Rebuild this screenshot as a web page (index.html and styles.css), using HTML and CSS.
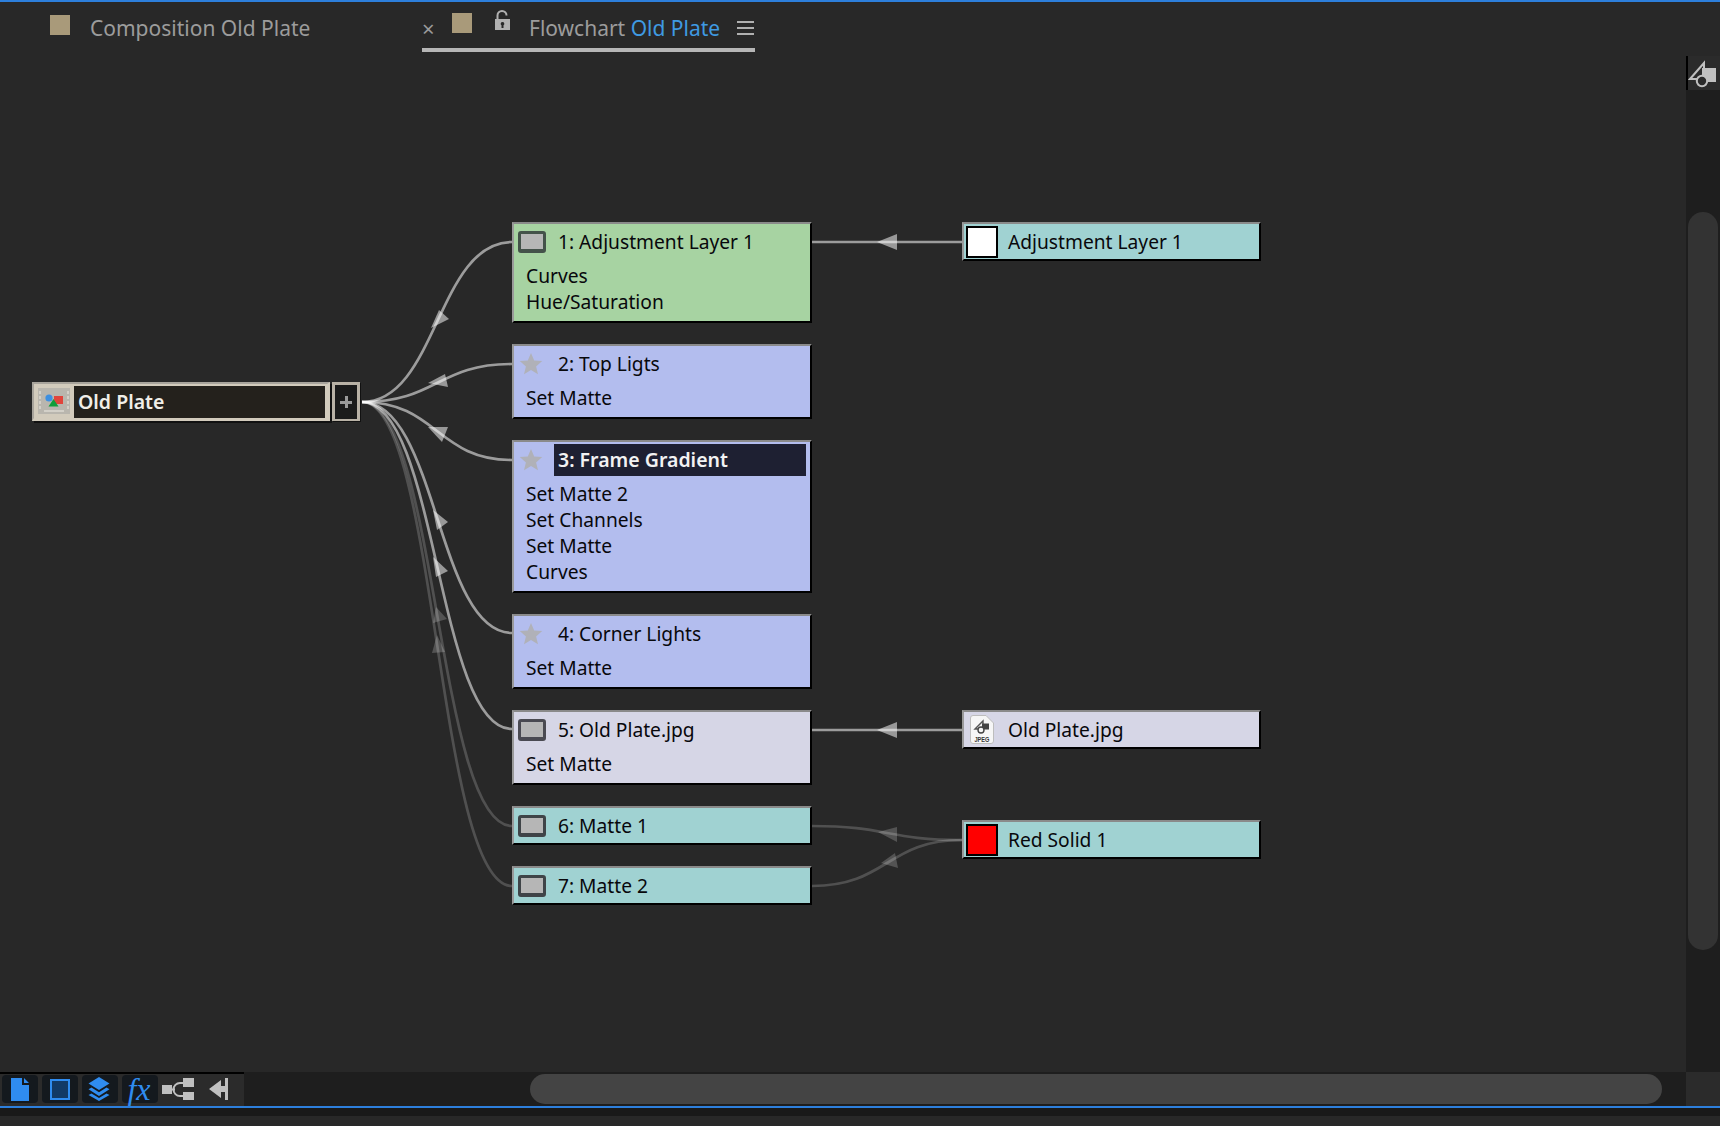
FILE: index.html
```html
<!DOCTYPE html>
<html lang="en">
<head>
<meta charset="utf-8">
<title>Flowchart Old Plate</title>
<link rel="stylesheet" href="styles.css">
</head>
<body>
<div class="app">
  <header class="tabs">
    <div class="tab tab-comp">
      <span class="swatch"></span>
      <span class="tab-label">Composition Old Plate</span>
    </div>
    <div class="tab tab-flow">
      <span class="close">×</span>
      <span class="swatch"></span>
      <svg class="lock" width="17" height="21" viewBox="0 0 17 21"><path d="M3.500 9V5.500a4.500 4.500 0 0 1 9 0" fill="none" stroke="#b0b0b0" stroke-width="2"/><path fill-rule="evenodd" fill="#b0b0b0" d="M1 9h15v11H1zM8.500 12a1.800 1.800 0 0 0-1 3.300V18h2v-2.700a1.800 1.800 0 0 0-1-3.300z"/></svg>
      <span class="tab-label">Flowchart <span class="accent">Old Plate</span></span>
      <span class="burger"><i></i><i></i><i></i></span>
    </div>
  </header>

  <div class="main">
    <section class="canvas">
      <svg class="edges" width="1686" height="1016" viewBox="0 56 1686 1016">
        <g class="edge light">
          <path d="M362 402C437 402 437 242 512 242"/>
          <path d="M362 402C437 402 437 364 512 364"/>
          <path d="M362 402C437 402 437 460 512 460"/>
          <path d="M362 402C437 402 437 633 512 633"/>
          <path d="M362 402C437 402 437 729 512 729"/>
          <path d="M812 242H962"/>
          <path d="M812 730H962"/>
        </g>
        <g class="edge dark">
          <path d="M362 402C437 402 437 826 512 826"/>
          <path d="M362 402C437 402 437 886 512 886"/>
          <path d="M812 826C887 826 887 840 962 840"/>
          <path d="M812 886C887 886 887 840 962 840"/>
        </g>
        <g class="arrow light-a">
          <polygon points="439,310 449,319 431,328"/>
          <polygon points="428,383 445,374 448,387"/>
          <polygon points="428,427 448,427 442,442"/>
          <polygon points="433,510 448,522 437,530"/>
          <polygon points="433,557 448,571 436,577"/>
          <polygon points="877,242 897,234 897,250"/>
          <polygon points="877,730 897,722 897,738"/>
        </g>
        <g class="arrow dark-a">
          <polygon points="436,607 447,619 433,623"/>
          <polygon points="437,635 445,652 432,653"/>
          <polygon points="878,832 897,827 897,842"/>
          <polygon points="881,863 895,853 898,868"/>
        </g>
      </svg>

      <div class="comp">
        <div class="comp-main">
          <span class="comp-icon">
            <svg width="32" height="26" viewBox="0 0 32 26">
              <rect width="32" height="26" fill="#b9b6ae"/>
              <path d="M2 3v20M30 3v20" stroke="#d3d0c8" stroke-width="2" stroke-dasharray="3 2" fill="none"/>
              <path d="M6 23h20" stroke="#d3d0c8" stroke-width="2" fill="none"/>
              <circle cx="11" cy="10" r="3.600" fill="#3d8fe0"/>
              <path d="M16 8h9v8h-9z" fill="#e0443c"/>
              <path d="M15.500 11l5 7.500h-10z" fill="#0f9d3a"/>
            </svg>
          </span>
          <span class="comp-name">Old Plate</span>
        </div>
        <div class="comp-plus"><span class="plus"></span></div>
      </div>

      <article class="node layer n1 green">
        <div class="node-head"><span class="slot"><span class="layer-icon"></span></span><span class="title">1: Adjustment Layer 1</span></div>
        <ul class="effects"><li>Curves</li><li>Hue/Saturation</li></ul>
      </article>
      <article class="node layer n2 lav">
        <div class="node-head"><span class="slot"><svg class="star" width="24" height="24" viewBox="0 0 24 24"><path d="M12 1l3.200 7.400 8 .7-6.100 5.300 1.900 7.900-7-4.200-7 4.200 1.900-7.900L.8 9.100l8-.7z"/></svg></span><span class="title">2: Top Ligts</span></div>
        <ul class="effects"><li>Set Matte</li></ul>
      </article>
      <article class="node layer n3 lav">
        <div class="node-head"><span class="slot"><svg class="star" width="24" height="24" viewBox="0 0 24 24"><path d="M12 1l3.200 7.400 8 .7-6.100 5.300 1.900 7.900-7-4.200-7 4.200 1.900-7.900L.8 9.100l8-.7z"/></svg></span><span class="title selected">3: Frame Gradient</span></div>
        <ul class="effects"><li>Set Matte 2</li><li>Set Channels</li><li>Set Matte</li><li>Curves</li></ul>
      </article>
      <article class="node layer n4 lav">
        <div class="node-head"><span class="slot"><svg class="star" width="24" height="24" viewBox="0 0 24 24"><path d="M12 1l3.200 7.400 8 .7-6.100 5.300 1.900 7.900-7-4.200-7 4.200 1.900-7.900L.8 9.100l8-.7z"/></svg></span><span class="title">4: Corner Lights</span></div>
        <ul class="effects"><li>Set Matte</li></ul>
      </article>
      <article class="node layer n5 pale">
        <div class="node-head"><span class="slot"><span class="layer-icon"></span></span><span class="title">5: Old Plate.jpg</span></div>
        <ul class="effects"><li>Set Matte</li></ul>
      </article>
      <article class="node layer n6 teal">
        <div class="node-head"><span class="slot"><span class="layer-icon"></span></span><span class="title">6: Matte 1</span></div>
      </article>
      <article class="node layer n7 teal">
        <div class="node-head"><span class="slot"><span class="layer-icon"></span></span><span class="title">7: Matte 2</span></div>
      </article>

      <article class="node source s1 teal">
        <div class="node-head"><span class="slot"><span class="solid solid-white"></span></span><span class="title">Adjustment Layer 1</span></div>
      </article>
      <article class="node source s2 pale">
        <div class="node-head"><span class="slot"><svg class="file" width="24" height="29" viewBox="0 0 24 29">
          <path d="M3 .5h13l7.500 7.500v18a2.500 2.500 0 0 1-2.500 2.500H3A2.500 2.500 0 0 1 .5 26V3A2.500 2.500 0 0 1 3 .5z" fill="#f6f6f6" stroke="#bdbdbd"/>
          <path d="M5 14L13 6v8z" fill="none" stroke="#555" stroke-width="1.400"/>
          <path d="M12 8.500h7v6h-7z" fill="#444"/>
          <circle cx="11" cy="15" r="3" fill="#f6f6f6" stroke="#444" stroke-width="1.400"/>
          <text class="file-type" x="12" y="26.500" text-anchor="middle" textLength="15" lengthAdjust="spacingAndGlyphs">JPEG</text>
        </svg></span><span class="title">Old Plate.jpg</span></div>
      </article>
      <article class="node source s3 teal">
        <div class="node-head"><span class="slot"><span class="solid solid-red"></span></span><span class="title">Red Solid 1</span></div>
      </article>
    </section>

    <aside class="vscroll">
      <div class="vscroll-tool">
        <svg width="30" height="30" viewBox="0 0 30 30">
          <path d="M14 10h14v14H14z" fill="#c0c0c0"/>
          <path d="M2 21L16 5v16z" fill="none" stroke="#c0c0c0" stroke-width="2"/>
          <circle cx="14" cy="23" r="5.200" fill="#2a2a2a" stroke="#c0c0c0" stroke-width="2"/>
        </svg>
      </div>
      <div class="vscroll-track"><div class="vscroll-thumb"></div></div>
    </aside>
  </div>

  <footer class="bottom">
    <div class="tools">
      <span class="tool-btn">
        <svg width="18" height="23" viewBox="0 0 18 23"><path d="M0 0h11v7h7v16H0zM13 0l5 5h-5z" fill="#2f8cf0"/></svg>
      </span>
      <span class="tool-btn">
        <svg width="20" height="21" viewBox="0 0 20 21"><rect x="1" y="1" width="18" height="19" fill="#123a66" stroke="#2f8cf0" stroke-width="2"/></svg>
      </span>
      <span class="tool-btn tool-layers">
        <svg width="22" height="24" viewBox="0 0 22 24"><path d="M11 0l10.500 6.500L11 13 .5 6.500z" fill="#2f8cf0"/><path d="M3.500 10.500L11 15.300l7.500-4.800 3 1.800L11 19 .5 12.300zM3.500 16.500L11 21l7.500-4.500 3 1.600L11 24 .5 18.100z" fill="#2f8cf0"/></svg>
      </span>
      <span class="tool-btn fx">fx</span>
      <span class="tool-plain">
        <svg width="32" height="22" viewBox="0 0 32 22"><path d="M0 7h10v9H0zM21 0h11v9H21zM21 14h11v8H21z" fill="#c0c0c0"/><path d="M9 11.500h4M21 5h-3a6.500 6.500 0 0 0 0 13h3" fill="none" stroke="#c0c0c0" stroke-width="2"/></svg>
      </span>
      <span class="tool-plain tool-last">
        <svg width="19" height="22" viewBox="0 0 19 22"><path d="M16 0h3v22h-3zM0 11l12-9v6h4v6h-4v6z" fill="#c0c0c0"/></svg>
      </span>
    </div>
    <div class="htrack"><div class="hthumb"></div></div>
    <div class="corner"></div>
  </footer>
  <div class="blue-line"></div>
  <div class="under-line"></div>
</div>
</body>
</html>
```
FILE: styles.css
```css
* { box-sizing: border-box; }
html, body { margin: 0; padding: 0; height: 100%; overflow: hidden; background: #282828; }
body { font-family: "Noto Sans", "Open Sans", sans-serif; }

.app { width: 1720px; height: 1126px; display: flex; flex-direction: column; background: #282828; border-top: 2px solid #2d7fdc; }

/* Tabs */
.tabs { height: 54px; flex: none; display: flex; align-items: flex-start; }
.tab { height: 50px; display: flex; align-items: center; color: #9c9c9c; font-size: 21px; padding-bottom: 2px; }
.tab-comp { width: 422px; padding-left: 50px; gap: 20px; }
.tab-flow { width: 333px; border-bottom: 4px solid #b6b6b6; }
.swatch { width: 20px; height: 20px; background: #a99a7a; flex: none; margin-bottom: 2px; }
.tab-label { line-height: 24px; margin-top: 3px; white-space: nowrap; }
.tab-flow .tab-label { margin-left: 18px; margin-top: 7px; }
.close { width: 30px; font-size: 22px; line-height: 20px; margin-top: 8px; color: #9a9a9a; }
.lock { margin-left: 22px; margin-bottom: 8px; flex: none; }
.accent { color: #3f9ae2; }
.burger { width: 17px; margin-left: 17px; display: flex; flex-direction: column; gap: 4px; margin-top: 8px; flex: none; }
.burger i { display: block; height: 2px; background: #b0b0b0; }

/* Main */
.main { flex: none; height: 1016px; display: flex; }
.canvas { position: relative; width: 1686px; flex: none; }
.edges { position: absolute; left: 0; top: 0; }
.edge path { fill: none; stroke-width: 2.700; }
.edge.light path { stroke: rgba(255,255,255,.54); }
.edge.dark path { stroke: rgba(255,255,255,.19); }
.arrow.light-a polygon { fill: rgba(255,255,255,.52); }
.arrow.dark-a polygon { fill: rgba(255,255,255,.2); }

/* Composition node */
.comp { position: absolute; left: 32px; top: 326px; display: flex; gap: 2px; height: 39px; }
.comp-main { width: 298px; display: flex; background: #d2cbbc; border-top: 2px solid #a8a49c; border-left: 2px solid #a8a49c; border-right: 3px solid #d2cbbc; border-bottom: 3px solid #d2cbbc; box-shadow: 2px 2px 0 #111; padding-top: 2px; }
.comp-icon { width: 40px; display: flex; align-items: center; justify-content: center; flex: none; padding-bottom: 2px; }
.comp-name { flex: 1; background: #24211c; color: #f0eee8; font-size: 19.500px; font-weight: 600; line-height: 32px; padding-left: 4px; margin-right: 2px; }
.comp-plus { width: 28px; border: 3px solid #b9b2a6; border-bottom-width: 2px; background: #1b1b1b; display: flex; align-items: center; justify-content: center; box-shadow: 1px 1px 0 #111; }
.plus { width: 12px; height: 12px; background: linear-gradient(#9a9a9a,#9a9a9a) center/12px 3px no-repeat, linear-gradient(#9a9a9a,#9a9a9a) center/3px 12px no-repeat; }

/* Flow nodes */
.node { position: absolute; border-top: 2px solid #8a8a8a; border-left: 2px solid #9a9a9a; border-right: 2px solid #000; border-bottom: 2px solid #000; color: #08080c; font-size: 19.200px; }
.layer { left: 512px; width: 300px; }
.source { left: 962px; width: 299px; height: 39px; }
.n1 { top: 166px; }
.n2 { top: 288px; }
.n3 { top: 384px; }
.n4 { top: 558px; }
.n5 { top: 654px; }
.n6 { top: 750px; }
.n7 { top: 810px; }
.s1 { top: 166px; }
.s2 { top: 654px; }
.s3 { top: 764px; }
.green { background: #a7d3a2; }
.lav { background: #b3bdee; }
.pale { background: #d6d6e6; }
.teal { background: #a0d2d2; }

.node-head { height: 35px; display: flex; align-items: center; }
.slot { width: 44px; flex: none; display: flex; align-items: center; padding-left: 4px; }
.title { line-height: 32px; white-space: nowrap; }
.title.selected { flex: 1; height: 32px; margin: 0 4px 0 -4px; padding-left: 4px; background: #1e2032; color: #f2f2f2; font-weight: 600; font-size: 19.500px; }
.effects { list-style: none; margin: 0; padding: 4px 0 6px 12px; }
.effects li { line-height: 26px; height: 26px; }

.layer-icon { display: block; width: 28px; height: 22px; background: #b6b6b6; border: 3px solid #3f4448; border-bottom-width: 4px; border-radius: 3px; }
.star { display: block; fill: #b0b1b8; margin-left: 1px; }
.n1 .layer-icon { border-color: #44524a; }
.n5 .layer-icon { border-color: #4a4a52; }
.source .slot { padding-left: 2px; }
.solid { display: block; width: 32px; height: 32px; border: 2px solid #000; }
.solid-white { background: #fff; }
.solid-red { background: #f00; }
.file { margin-left: 4px; }
.file-type { font-family: "Liberation Sans", sans-serif; font-size: 7px; font-weight: 700; fill: #333; }

/* Vertical scroll */
.vscroll { width: 34px; flex: none; display: flex; flex-direction: column; }
.vscroll-tool { height: 34px; background: #2b2b2b; border-left: 2px solid #000; display: flex; align-items: center; }
.vscroll-track { flex: 1; background: #1e1e1e; padding: 122px 2px 0 2px; }
.vscroll-thumb { height: 738px; border-radius: 15px; background: #333; }

/* Bottom */
.bottom { height: 34px; flex: none; display: flex; }
.tools { width: 244px; flex: none; display: flex; align-items: center; gap: 4px; padding-left: 2px; background: #2b2b2b; border-top: 2px solid #000; padding-bottom: 2px; }
.tool-btn { width: 36px; height: 28px; flex: none; background: #14191e; border-radius: 4px; display: flex; align-items: center; justify-content: center; }
.tool-layers svg { margin-right: 2px; }
.fx { color: #2f8cf0; font-family: "Liberation Serif", serif; font-style: italic; font-size: 32px; line-height: 28px; padding-right: 2px; }
.tool-plain { width: 32px; flex: none; display: flex; align-items: center; }
.tool-last { margin-left: 11px; width: 19px; }
.htrack { flex: 1; background: #1e1e1e; padding: 2px 0 2px 286px; }
.hthumb { width: 1132px; height: 30px; border-radius: 15px; background: #444; }
.corner { width: 34px; flex: none; background: #2b2b2b; }
.blue-line { height: 2px; flex: none; background: #2d7fdc; }
.under-line { height: 8px; flex: none; background: #191919; }
```
